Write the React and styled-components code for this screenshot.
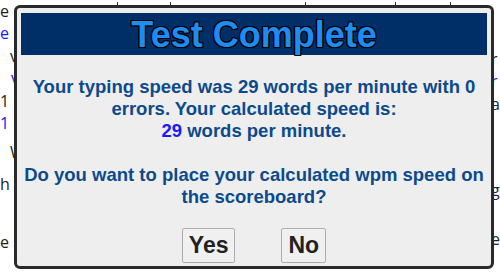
import React from "react";
import styled, { createGlobalStyle } from "styled-components";

const GlobalStyle = createGlobalStyle`
  html, body {
    margin: 0;
    padding: 0;
    background: #ffffff;
  }
  body {
    width: 500px;
    height: 279px;
    overflow: hidden;
    font-family: "Liberation Sans", Arial, sans-serif;
  }
`;

const Page = styled.div`
  position: relative;
  width: 500px;
  height: 279px;
  overflow: hidden;
  background: #ffffff;
`;

const Backdrop = styled.div`
  display: flex;
  width: 500px;
  height: 279px;
  font-family: "Open Sans", "DejaVu Sans", sans-serif;
  font-size: 16px;
`;

const LeftColumn = styled.div`
  flex: 0 0 60px;
  display: flex;
  flex-direction: column;
`;

const Middle = styled.div`
  flex: 1;
`;

const RightColumn = styled.div`
  flex: 0 0 6px;
  display: flex;
  flex-direction: column;
  white-space: nowrap;
`;

const Word = styled.div`
  height: 22px;
  line-height: 22px;
  margin-top: ${(p) => p.$gap || 0}px;
  padding-left: ${(p) => p.$indent || 0}px;
  color: ${(p) => (p.$blue ? "#1a1aff" : "#222222")};
  white-space: nowrap;
`;

const TickRow = styled.div`
  display: flex;
  padding-top: 2px;
`;

const Tick = styled.span`
  width: 1px;
  height: 3px;
  margin-left: ${(p) => p.$offset}px;
  background: #333333;
`;

const Dialog = styled.div`
  position: absolute;
  left: 14px;
  top: 5px;
  width: 480px;
  height: 264px;
  box-sizing: border-box;
  border: 3px solid #2a2a2a;
  border-radius: 6px;
  background: #eeeeee;
  padding: 5px 4px 3px;
  display: flex;
  flex-direction: column;
`;

const Header = styled.div`
  height: 42px;
  background: #002e66;
  display: flex;
  justify-content: center;
  align-items: flex-start;
  padding-top: 2px;
  box-sizing: border-box;
`;

const Title = styled.h1`
  margin: 0;
  font-family: "Liberation Sans", Arial, sans-serif;
  font-size: 36px;
  font-weight: bold;
  line-height: 40px;
  color: #1e8cf5;
  text-shadow: -1px -1px 0 #000, 1px -1px 0 #000, -1px 1px 0 #000,
    1px 1px 0 #000, 0 1px 0 #000, 0 -1px 0 #000, 1px 0 0 #000, -1px 0 0 #000;
`;

const Message = styled.p`
  margin: 21px 0 0;
  font-family: "Liberation Sans", Arial, sans-serif;
  font-size: 18.5px;
  font-weight: bold;
  line-height: 22px;
  color: #0c4a8c;
  text-align: center;
`;

const Speed = styled.span`
  color: #1a1aff;
`;

const ButtonRow = styled.div`
  margin-top: 20px;
  display: flex;
  justify-content: center;
  gap: 46px;
`;

const Button = styled.button`
  height: 35px;
  box-sizing: border-box;
  padding: 0 6px;
  border: 1px solid #adadad;
  border-radius: 2px;
  background: #f0f0f0;
  font-family: "Liberation Sans", Arial, sans-serif;
  font-size: 23px;
  font-weight: bold;
  line-height: 33px;
  color: #222222;
  cursor: pointer;
`;

const leftWords = [
  { t: "e", gap: 0 },
  { t: "e", gap: 0, blue: true },
  { t: "v", gap: 1, indent: 10 },
  { t: "v", gap: 0, indent: 11, blue: true },
  { t: "1", gap: 1 },
  { t: "1", gap: 0, blue: true },
  { t: "W", gap: 7, indent: 10 },
  { t: "h", gap: 10 },
  { t: "e", gap: 36 },
];

const rightWords = [
  { t: "r", gap: 48 },
  { t: "r", gap: 0, blue: true },
  { t: "a", gap: 1 },
  { t: "g", gap: 64 },
  { t: "e", gap: 27 },
];

const ticks = [57, 52, 134, 89, 54];

export default function App() {
  return (
    <>
      <GlobalStyle />
      <Page>
        <Backdrop>
          <LeftColumn>
            {leftWords.map((w, i) => (
              <Word key={i} $gap={w.gap} $blue={w.blue} $indent={w.indent}>
                {w.t}
              </Word>
            ))}
          </LeftColumn>
          <Middle>
            <TickRow>
              {ticks.map((o, i) => (
                <Tick key={i} $offset={o} />
              ))}
            </TickRow>
          </Middle>
          <RightColumn>
            {rightWords.map((w, i) => (
              <Word key={i} $gap={w.gap} $blue={w.blue}>
                {w.t}
              </Word>
            ))}
          </RightColumn>
        </Backdrop>
        <Dialog>
          <Header>
            <Title>Test Complete</Title>
          </Header>
          <Message>
            Your typing speed was 29 words per minute with 0 errors. Your
            calculated speed is:
            <br />
            <Speed>29</Speed> words per minute.
            <br />
            <br />
            Do you want to place your calculated wpm speed on the scoreboard?
          </Message>
          <ButtonRow>
            <Button>Yes</Button>
            <Button>No</Button>
          </ButtonRow>
        </Dialog>
      </Page>
    </>
  );
}
